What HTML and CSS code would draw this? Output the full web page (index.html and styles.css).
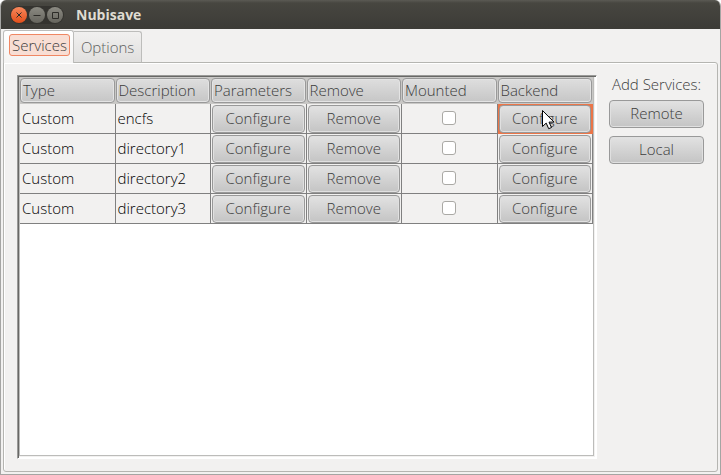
FILE: index.html
```html
<!DOCTYPE html>
<html lang="en">
<head>
<meta charset="utf-8">
<title>Nubisave</title>
<link rel="stylesheet" href="styles.css">
</head>
<body>
<div class="window">
  <header class="titlebar">
    <div class="controls">
      <button class="control close" type="button" aria-label="Close"><svg viewBox="0 0 16 16"><path d="M5.5 5.5l5 5M10.5 5.5l-5 5"/></svg></button>
      <button class="control" type="button" aria-label="Minimize"><svg viewBox="0 0 16 16"><path d="M4.500 8.500h7"/></svg></button>
      <button class="control" type="button" aria-label="Maximize"><svg viewBox="0 0 16 16"><path d="M5.500 5.500h6v6h-6z"/></svg></button>
    </div>
    <h1 class="title">Nubisave</h1>
  </header>
  <nav class="tabs">
    <button class="tab active" type="button"><span class="tab-focus">Services</span></button>
    <button class="tab" type="button">Options</button>
  </nav>
  <main class="panel">
    <section class="scroll">
      <div class="viewport">
      <table class="services">
        <thead>
          <tr>
            <th><span class="head">Type</span></th>
            <th><span class="head">Description</span></th>
            <th><span class="head">Parameters</span></th>
            <th><span class="head">Remove</span></th>
            <th><span class="head">Mounted</span></th>
            <th><span class="head">Backend</span></th>
          </tr>
        </thead>
        <tbody>
          <tr>
            <td>Custom</td><td>encfs</td>
            <td class="action"><button class="button" type="button">Configure</button></td>
            <td class="action"><button class="button" type="button">Remove</button></td>
            <td class="check"><input type="checkbox" aria-label="encfs mounted"></td>
            <td class="action focused"><button class="button" type="button">Configure</button>
              <svg class="pointer" viewBox="0 0 14 21"><path d="M1.500 1.500v16l3.700-3.400 2.500 5.600 2.800-1.200-2.500-5.400h5z"/></svg></td>
          </tr>
          <tr>
            <td>Custom</td><td>directory1</td>
            <td class="action"><button class="button" type="button">Configure</button></td>
            <td class="action"><button class="button" type="button">Remove</button></td>
            <td class="check"><input type="checkbox" aria-label="directory1 mounted"></td>
            <td class="action"><button class="button" type="button">Configure</button></td>
          </tr>
          <tr>
            <td>Custom</td><td>directory2</td>
            <td class="action"><button class="button" type="button">Configure</button></td>
            <td class="action"><button class="button" type="button">Remove</button></td>
            <td class="check"><input type="checkbox" aria-label="directory2 mounted"></td>
            <td class="action"><button class="button" type="button">Configure</button></td>
          </tr>
          <tr>
            <td>Custom</td><td>directory3</td>
            <td class="action"><button class="button" type="button">Configure</button></td>
            <td class="action"><button class="button" type="button">Remove</button></td>
            <td class="check"><input type="checkbox" aria-label="directory3 mounted"></td>
            <td class="action"><button class="button" type="button">Configure</button></td>
          </tr>
        </tbody>
      </table>
      </div>
    </section>
    <aside class="side">
      <p class="side-label">Add Services:</p>
      <button class="button" type="button">Remote</button>
      <button class="button" type="button">Local</button>
    </aside>
  </main>
</div>
</body>
</html>
```
FILE: styles.css
```css
* {
  box-sizing: border-box;
}

body {
  margin: 0;
  background: #fff;
  color: #3c3c3c;
  font: 300 15px/20px "Open Sans", "Noto Sans", sans-serif;
}

button {
  margin: 0;
  padding: 0;
  border: 0;
  color: inherit;
  font: inherit;
}

.window {
  display: flex;
  flex-direction: column;
  height: 100vh;
  background: #f2f1f0;
  border: 1px solid #a5a5a3;
  border-top: 0;
  border-radius: 6px 6px 0 0;
  overflow: hidden;
}

.titlebar {
  display: flex;
  align-items: center;
  gap: 12px;
  height: 29px;
  padding-left: 9px;
  flex: none;
  background: linear-gradient(#5b5a54, #474640 3px, #3c3b37);
}

.controls {
  display: flex;
  gap: 2px;
  padding: 1px;
  border-radius: 10px;
  background: #34332f;
}

.control {
  width: 16px;
  height: 16px;
  border-radius: 50%;
  background: linear-gradient(#8b8a82, #66655e);
}

.control svg {
  display: block;
  fill: none;
  stroke: #2d2c28;
}

.close {
  background: linear-gradient(#f7885c, #e34f1b);
}

.title {
  margin: 0;
  color: #dfdbd2;
  font-size: 14px;
  font-weight: 700;
}

.tabs {
  display: flex;
  align-items: flex-end;
  height: 33px;
  flex: none;
  padding-left: 2px;
}

.tab {
  height: 31px;
  padding: 0 7px;
  border: 1px solid #bdbdbb;
  border-left: 0;
  border-bottom: 0;
  border-radius: 0 3px 0 0;
  background: linear-gradient(#f1f0ef, #e0dfde);
  color: #606060;
}

.tab.active {
  position: relative;
  height: 33px;
  padding: 0 3px 4px 5px;
  border-left: 1px solid #bdbdbb;
  border-radius: 3px 3px 0 0;
  background: linear-gradient(#fff, #f4f3f2);
  color: #3c3c3c;
  margin-bottom: -1px;
}

.tab-focus {
  display: block;
  padding: 0 2px;
  border: 1px solid #f08763;
  border-radius: 3px;
  background: #f8ded4;
}

.panel {
  display: flex;
  flex: 1;
  gap: 12px;
  margin: 0 2px 2px;
  padding: 12px 13px;
  min-height: 0;
  border: 1px solid #b5b5b1;
  border-radius: 0 3px 3px 3px;
  box-shadow: inset 1px 1px #fff;
}

.scroll {
  flex: 1;
  min-width: 0;
  border: 1px solid #9a9a98;
  border-right-color: #fff;
  border-bottom-color: #fff;
  box-shadow: inset 1px 1px #686866, inset -1px -1px #fff;
  padding: 1px 2px 2px 1px;
}

.viewport {
  height: 100%;
  border: 1px solid #bcbcba;
  border-top: 0;
  background: #fff;
}

.services {
  width: 100%;
  table-layout: fixed;
  border-collapse: separate;
  border-spacing: 0;
}

.services th {
  height: 27px;
  padding: 1px 1px 1px 0;
  background: #c9c8c6;
  font-weight: inherit;
  text-align: left;
}

.head {
  display: block;
  height: 25px;
  padding: 1px 2px;
  border: 1px solid #999;
  border-radius: 4px;
  background: linear-gradient(#dedede, #c6c6c6);
  box-shadow: inset 0 0 0 1px #e4e4e4;
}

.services td {
  height: 30px;
  padding: 0 2px 2px;
  border-right: 1px solid #808080;
  border-bottom: 1px solid #808080;
  background: #f2f1f0;
  color: #000;
}

.services .action {
  padding: 0 1px;
}

.button {
  display: block;
  width: 100%;
  height: 28px;
  padding-bottom: 2px;
  border: 1px solid #999;
  border-radius: 4px;
  background: linear-gradient(#e2e2e2, #c4c4c4);
  box-shadow: inset 0 0 0 1px #e0e0e0;
  color: #3c3c3c;
  text-align: center;
}

.check input {
  display: block;
  width: 14px;
  height: 14px;
  margin: 0 auto;
  appearance: none;
  border: 1px solid #aaa9a5;
  border-radius: 3px;
  background: #fff;
}

.services .focused {
  position: relative;
  border-color: #eb7548;
  box-shadow: inset 0 0 0 2px #eb7548;
}

.pointer {
  position: absolute;
  left: 43px;
  top: 5px;
  width: 14px;
  height: 21px;
  fill: #fff;
  stroke: #000;
}

.side {
  flex: none;
  width: 95px;
}

.side-label {
  margin: -1px 0 6px;
  text-align: center;
  white-space: nowrap;
}

.side .button + .button {
  margin-top: 8px;
}
```
